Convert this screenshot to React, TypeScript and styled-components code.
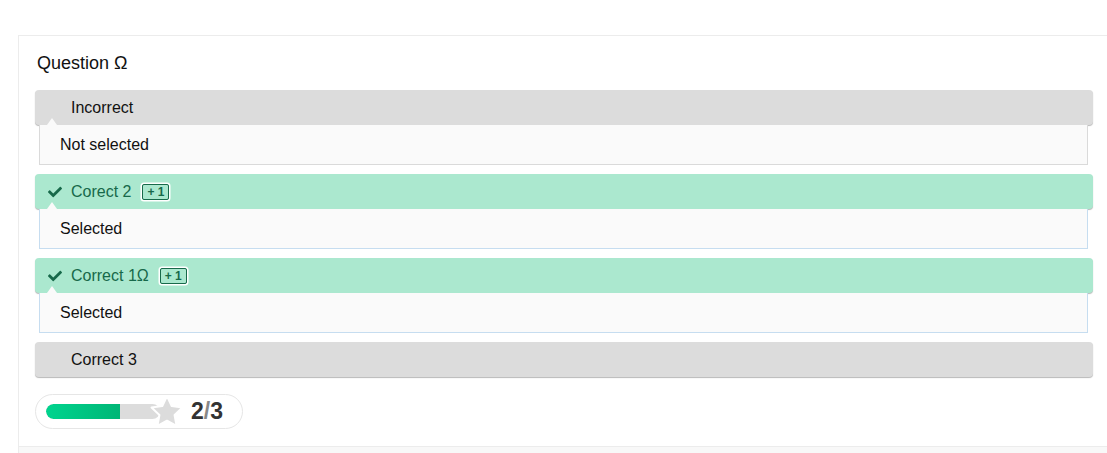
import { FaCheck } from "react-icons/fa";
import styled, { createGlobalStyle } from "styled-components";

const GlobalStyle = createGlobalStyle`
  html, body {
    margin: 0;
    padding: 0;
    background: #fff;
    overflow: hidden;
  }
  body {
    font-family: "Liberation Sans", Arial, Helvetica, sans-serif;
    color: #111;
  }
`;

const Page = styled.div`
  padding-top: 35px;
  padding-left: 18px;
  width: 1200px;
`;

const Panel = styled.div`
  width: 1058px;
  padding: 17px 17px 17px 16px;
  border-top: 1px solid #ececec;
  border-left: 1px solid #ececec;
  border-bottom: 1px solid #ececec;
  background: #fff;
`;

const Footer = styled.div`
  height: 12px;
  background: #f8f8f8;
  border-left: 1px solid #ececec;
`;

const Question = styled.div`
  font-size: 18px;
  line-height: 21px;
  margin-left: 2px;
  margin-bottom: 16px;
`;

const Answer = styled.div`
  margin-bottom: 9px;
`;

const Header = styled.div<{ $correct?: boolean }>`
  position: relative;
  display: flex;
  align-items: center;
  height: 35px;
  padding-left: 13px;
  border-radius: 4px;
  background: ${(p) => (p.$correct ? "#abe8cf" : "#dcdcdc")};
  color: ${(p) => (p.$correct ? "#17694a" : "#111")};
  box-shadow: 0 1px 1px rgba(0, 0, 0, 0.28);
  font-size: 16px;
`;

const IconSlot = styled.span`
  width: 23px;
  display: flex;
  align-items: center;
  font-size: 14px;
`;

const Badge = styled.span`
  margin-left: 11px;
  padding: 0 4px;
  height: 14px;
  line-height: 14px;
  font-size: 12px;
  font-weight: bold;
  border: 1.5px solid #17694a;
  border-radius: 2px;
  box-shadow: 0 0 0 1.5px #fff;
`;

const Notch = styled.span`
  position: absolute;
  left: 12px;
  bottom: 0;
  width: 0;
  height: 0;
  border-left: 5px solid transparent;
  border-right: 5px solid transparent;
  border-bottom: 7px solid #fafafa;
  z-index: 2;
`;

const Body = styled.div<{ $selected?: boolean }>`
  position: relative;
  margin: 0 5px 0 4px;
  height: 40px;
  box-sizing: border-box;
  display: flex;
  align-items: center;
  padding-left: 20px;
  background: #fafafa;
  border: 1px solid ${(p) => (p.$selected ? "#c6ddf0" : "#dadada")};
  border-top: none;
  font-size: 16px;
`;

const Score = styled.div`
  display: inline-flex;
  align-items: center;
  height: 33px;
  margin-top: 8px;
  padding: 0 19px 0 10px;
  border: 1px solid #e6e6e6;
  border-radius: 18px;
`;

const Track = styled.div`
  width: 114px;
  height: 15px;
  border-radius: 8px;
  background: #dcdcdc;
  overflow: hidden;
`;

const Fill = styled.div`
  height: 100%;
  background: linear-gradient(to right, #00d48e, #00b676);
  border-radius: 8px 0 0 8px;
`;

const Star = styled.svg`
  width: 36px;
  height: 36px;
  margin-left: -11px;
  margin-top: 1px;
`;

const Count = styled.span`
  margin-left: 6px;
  font-size: 23px;
  font-weight: bold;
  color: #333;

  i {
    font-style: normal;
    color: #888;
  }
`;

type Item = {
  label: string;
  correct?: boolean;
  body?: string;
};

const items: Item[] = [
  { label: "Incorrect", body: "Not selected" },
  { label: "Corect 2", correct: true, body: "Selected" },
  { label: "Correct 1Ω", correct: true, body: "Selected" },
  { label: "Correct 3" },
];

export default function App() {
  const score = 2;
  const total = 3;
  return (
    <>
      <GlobalStyle />
      <Page>
        <Panel>
          <Question>Question Ω</Question>
          {items.map((it) => (
            <Answer key={it.label}>
              <Header $correct={it.correct}>
                <IconSlot>{it.correct && <FaCheck />}</IconSlot>
                {it.label}
                {it.correct && <Badge>+ 1</Badge>}
                {it.body && <Notch />}
              </Header>
              {it.body && <Body $selected={it.correct}>{it.body}</Body>}
            </Answer>
          ))}
          <Score>
            <Track>
              <Fill style={{ width: `${(score / total) * 100 - 2}%` }} />
            </Track>
            <Star viewBox="0 0 20 20">
              <path
                d="M10 1.2l2.6 5.5 6 .8-4.4 4.2 1.1 6L10 14.8l-5.3 2.9 1.1-6L1.4 7.5l6-.8z"
                fill="#dcdcdc"
                stroke="#fff"
                strokeWidth="1.1"
                strokeLinejoin="round"
              />
            </Star>
            <Count>
              {score}
              <i>/</i>
              {total}
            </Count>
          </Score>
        </Panel>
        <Footer />
      </Page>
    </>
  );
}
